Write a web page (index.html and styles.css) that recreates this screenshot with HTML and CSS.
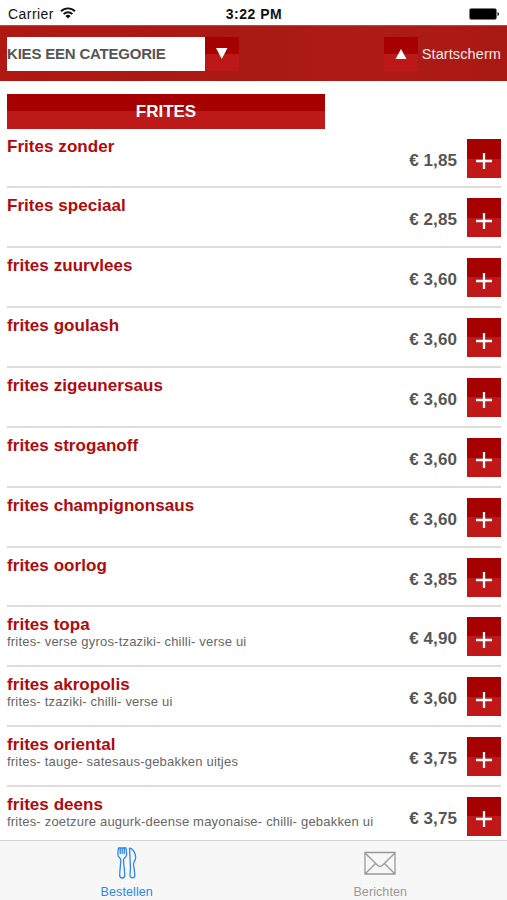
FILE: index.html
```html
<!DOCTYPE html>
<html lang="nl">
<head>
  <meta charset="UTF-8" />
  <meta name="viewport" content="width=device-width, initial-scale=1.0"/>
  <title>Bestellen</title>
  <link rel="stylesheet" href="styles.css">
</head>
<body>
  <div class="status">
    <div class="carrier">
      <span>Carrier</span>
      <svg class="wifi" width="16" height="12" viewBox="0 0 16 12" fill="none" stroke="#111" stroke-width="1.9">
        <path d="M1 4.3C5 .4 11 .4 15 4.3M3.6 7.1c2.5-2.4 6.300-2.400 8.800 0"/>
        <path d="M5.400 9a3.700 3.700 0 0 1 5.200 0L8 11.600z" fill="#111" stroke="none"/>
      </svg>
    </div>
    <b class="clock">3:22 PM</b>
    <div class="battery">
      <svg width="31" height="12" viewBox="0 0 31 12">
        <rect x=".5" y=".5" width="27" height="11" rx="1.800" fill="#000" stroke="#777" stroke-width=".6"/>
        <path d="M28.500 4v4c2-.5 2-3.500 0-4z" fill="#222"/>
      </svg>
    </div>
  </div>

  <header class="header">
    <div class="select"><span>KIES EEN CATEGORIE</span></div>
    <div class="arrow">
      <svg width="12" height="11" viewBox="0 0 12 11"><path d="M0 0h11.500L5.750 11z" fill="#fff"/></svg>
    </div>
    <div class="arrow home">
      <svg width="12" height="10" viewBox="0 0 12 10"><path d="M.5 10h11L6 0z" fill="#fff"/></svg>
    </div>
    <span class="start">Startscherm</span>
  </header>

  <main class="content">
    <h1 class="title">FRITES</h1>
    <div id="lijst"></div>
  </main>

  <nav class="tabs">
    <div class="tab active">
      <svg width="20" height="32" viewBox="0 0 20 32" fill="none" stroke="currentColor" stroke-width="1.300" stroke-linejoin="round" stroke-linecap="round">
        <path d="M1.500 1C1 4 .7 6 .9 8c.2 2.300 2.900 2.800 2.900 5 0 4-1.100 10-1.100 15.500 0 3.300 5 3.300 5 0C7.700 23 6.500 17 6.500 13c0-2.200 2.900-2.700 3.100-5 .2-2-.1-4-.6-7H7.300v5.500M1.500 1h1.700v5.500M5.200 1v5.500M3.200 1h4"/>
        <path d="M12.500 1.200c3 0 6.200 4.800 6.200 9.300 0 3-2.200 4.500-2.200 6.500 0 2.500 1.300 7.500 1.300 11.500 0 3.200-4.800 3.200-4.800 0 0-3 .8-7 .3-11.500z"/>
      </svg>
      <span>Bestellen</span>
    </div>
    <div class="tab">
      <svg width="32" height="32" viewBox="0 0 32 32" fill="none" stroke="currentColor" stroke-width="1.300">
        <path d="M1 5.500h30v21.500H1zM1 6l12.500 12.200c1.700 1.500 3.300 1.500 5 0L31 6M1.500 26.500l10-10M30.500 26.500l-10-10"/>
      </svg>
      <span>Berichten</span>
    </div>
  </nav>

  <script src="script.js"></script>
</body>
</html>
```
FILE: styles.css
```css
* {
  box-sizing: border-box;
}
body {
  margin: 0;
  height: 900px;
  display: flex;
  flex-direction: column;
  overflow: hidden;
  background: #fff;
  color: #555;
  font-family: "Liberation Sans", Arial, sans-serif;
}
.status {
  flex: none;
  height: 25px;
  padding: 2px 7px 0 8px;
  display: grid;
  grid-template-columns: 1fr auto 1fr;
  align-items: center;
  color: #111;
  font-size: 14px;
}
.carrier {
  display: flex;
  align-items: center;
  gap: 6px;
  letter-spacing: 0.45px;
}
.wifi {
  margin-bottom: 2px;
}
.clock {
  letter-spacing: 0.5px;
}
.battery {
  display: flex;
  justify-content: flex-end;
}
.header {
  flex: none;
  height: 56px;
  padding: 0 6px 0 7px;
  display: flex;
  align-items: center;
  background: linear-gradient(90deg, #b01812, #a91a14 50%, #ae1b17 75%, #a91914);
  border-top: 1px solid #bd4a42;
}
.select {
  width: 198px;
  height: 34px;
  display: flex;
  align-items: center;
  background: #fff;
  color: #555;
  font-size: 15px;
  font-weight: bold;
  letter-spacing: -0.2px;
  white-space: nowrap;
}
.arrow {
  width: 34px;
  height: 34px;
  display: flex;
  align-items: center;
  justify-content: center;
  background: linear-gradient(#a60000 50%, #bd1818 50%);
}
.home {
  margin-left: auto;
}
.start {
  margin-left: 4px;
  color: #fbe9e8;
  font-size: 14.5px;
  letter-spacing: 0.1px;
}
.content {
  flex: 1;
  min-height: 0;
  overflow: hidden;
  padding: 13px 6px 0 7px;
}
.title {
  width: 318px;
  height: 34.5px;
  margin: 0;
  background: linear-gradient(#a60000 50%, #bd1a1a 50%);
  color: #fff;
  font-size: 17px;
  line-height: 36px;
  text-align: center;
}
.item {
  height: 59.87px;
  display: flex;
  align-items: flex-start;
  border-bottom: 2px solid #dcdcdc;
}
.info {
  flex: 1;
  padding-top: 8px;
}
.name {
  color: #b00a0e;
  font-size: 17px;
  line-height: 20px;
  font-weight: bold;
  letter-spacing: 0.05px;
}
.note {
  color: #666;
  font-size: 13px;
  line-height: 14px;
  letter-spacing: 0.2px;
}
.price {
  margin-right: 10px;
  font-size: 17px;
  line-height: 20px;
  padding-top: 22px;
  font-weight: bold;
  letter-spacing: 0.1px;
}
.plus {
  width: 34px;
  height: 39px;
  margin-top: 10px;
  padding-top: 6px;
  display: flex;
  align-items: center;
  justify-content: center;
  background: linear-gradient(#a60000 50%, #c01818 50%);
}
.tabs {
  flex: none;
  height: 60px;
  display: flex;
  background: #f7f7f7;
  border-top: 1px solid #d4d4d4;
}
.tab {
  flex: 1;
  display: flex;
  flex-direction: column;
  align-items: center;
  padding-top: 6px;
  color: #999;
  font-size: 12.5px;
}
.tab span {
  margin-top: 6px;
  line-height: 14px;
  letter-spacing: 0.1px;
}
.active {
  color: #2e86ee;
}
```
FILE: script.js
```javascript
const producten = [
  ["Frites zonder", "1,85"],
  ["Frites speciaal", "2,85"],
  ["frites zuurvlees", "3,60"],
  ["frites goulash", "3,60"],
  ["frites zigeunersaus", "3,60"],
  ["frites stroganoff", "3,60"],
  ["frites champignonsaus", "3,60"],
  ["frites oorlog", "3,85"],
  ["frites topa", "4,90", "frites- verse gyros-tzaziki- chilli- verse ui"],
  ["frites akropolis", "3,60", "frites- tzaziki- chilli- verse ui"],
  ["frites oriental", "3,75", "frites- tauge- satesaus-gebakken uitjes"],
  ["frites deens", "3,75", "frites- zoetzure augurk-deense mayonaise- chilli- gebakken ui"]
];

document.getElementById("lijst").innerHTML = producten.map(([naam, prijs, uitleg]) => `
  <div class="item">
    <div class="info">
      <div class="name">${naam}</div>
      ${uitleg ? `<div class="note">${uitleg}</div>` : ""}
    </div>
    <div class="price">€ ${prijs}</div>
    <div class="plus">
      <svg width="16" height="16" viewBox="0 0 16 16"><path d="M8 0v16M0 8h16" stroke="#fff" stroke-width="2.300"/></svg>
    </div>
  </div>`).join("");
```
